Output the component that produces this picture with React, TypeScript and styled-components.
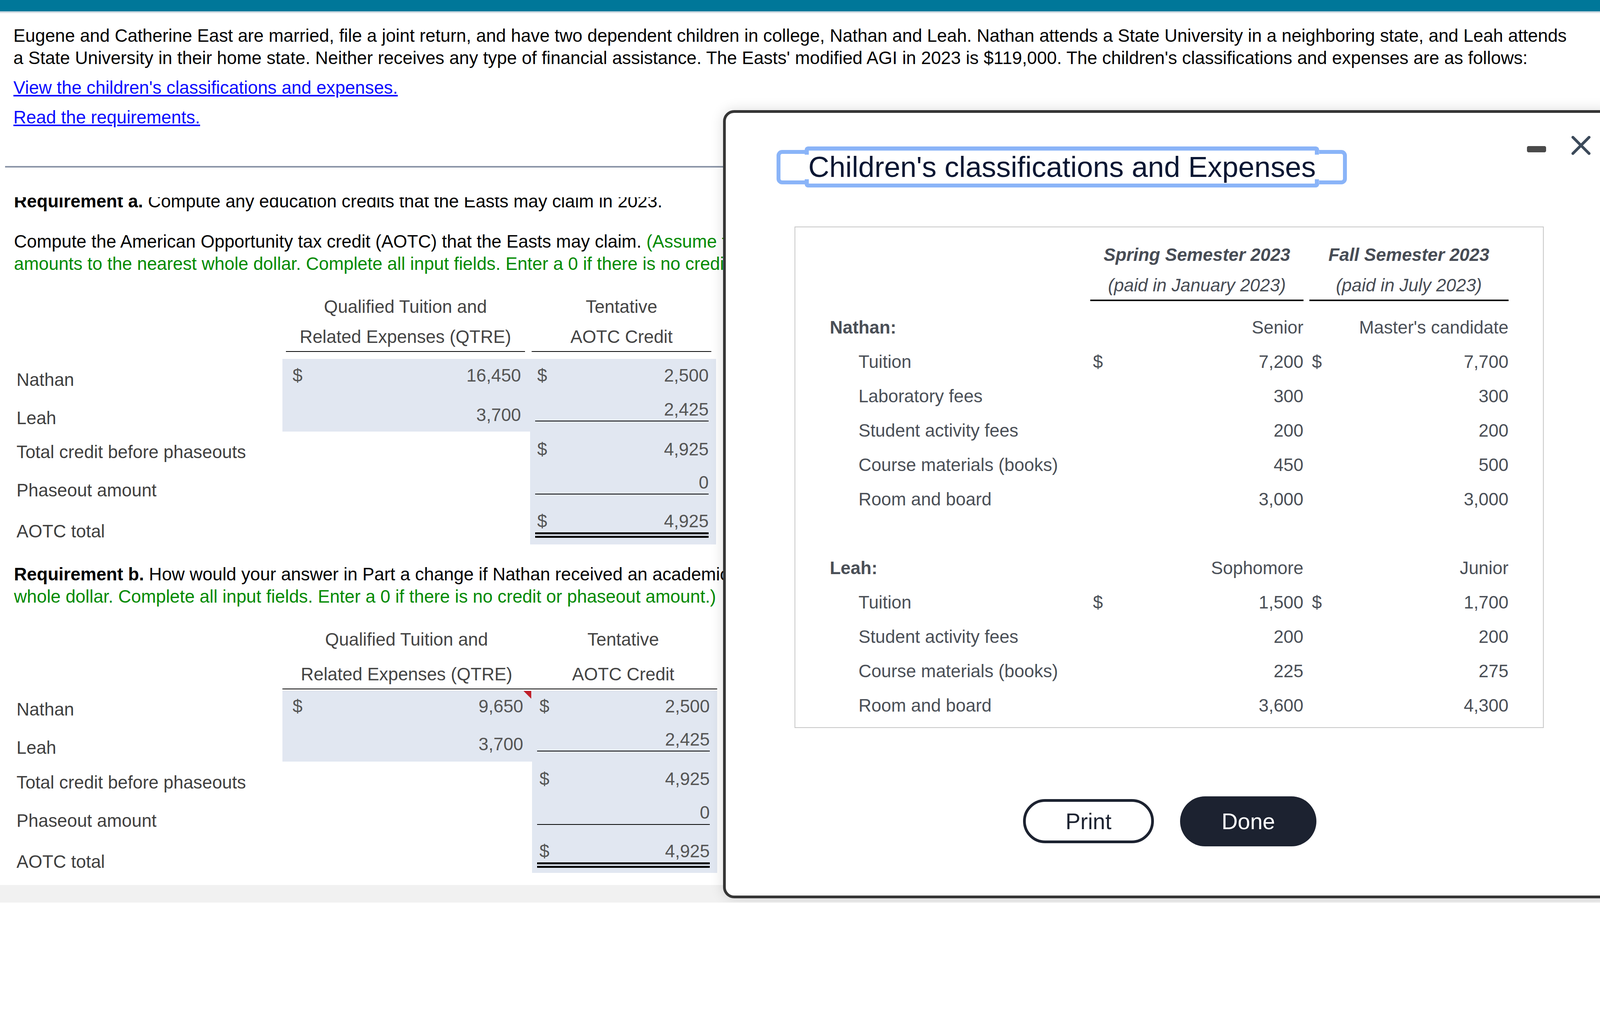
import React from "react";
import styled, { createGlobalStyle } from "styled-components";

const FONT = `"Liberation Sans", Arial, Helvetica, sans-serif`;
const RING = "#8ab4f8";
const SHADE = "#e1e7f1";
const NAVY = "#1c2230";
const DESIGN_WIDTH = 1432.6;

const GlobalStyle = createGlobalStyle`
  html, body { margin: 0; padding: 0; background: #ffffff; overflow: hidden; }
  body { font-family: ${FONT}; }
  *, *::before, *::after { box-sizing: border-box; }
`;

const Page = styled.div<{ $zoom: number }>`
  zoom: ${(p) => p.$zoom};
  position: relative;
  height: 808.31px;
  overflow: hidden;
  display: flex;
  flex-direction: column;
  background: #ffffff;
  font-family: ${FONT};
  font-size: 16px;
  line-height: 20px;
  color: #000;
`;

const TopBar = styled.div`
  flex: none;
  height: 10.2px;
  background: #007799;
  box-shadow: 0 1.5px 0 #d3dbe3;
`;

const Intro = styled.div`
  flex: none;
  padding: 11.8px 18px 0 12px;
`;

const Para = styled.p<{ $mt?: number }>`
  margin: ${(p) => p.$mt ?? 0}px 0 0 0;
`;

const LinkLine = styled.div`
  margin-top: 6.5px;
`;

const TextLink = styled.a`
  color: #0a0aff;
  text-decoration: underline;
  cursor: pointer;
`;

const Divider = styled.div`
  flex: none;
  margin: 33.7px 0 0 4.7px;
  height: 1.2px;
  background: #8b95a7;
`;

const ScrollArea = styled.div`
  flex: none;
  margin-top: 26.8px;
  height: 615.9px;
  overflow: hidden;
`;

const ScrollContent = styled.div`
  margin-top: -6.3px;
  padding: 0 18px 0 12.5px;
`;

const Bold = styled.b`
  font-weight: 700;
`;

const Hint = styled.span`
  color: #008a00;
`;

const Footer = styled.div`
  flex: 1;
  background: #f1f1f1;
`;

/* ---------- AOTC worksheet tables ---------- */

type Line = "single" | "double";
type Cell = { value: string; dollar?: boolean; top: number; line?: Line; flag?: boolean };
type Row = { label: string; h: number; labelTop: number; qtre?: Cell; credit: Cell };
type TableSpec = {
  cols: [number, number, number];
  top: number;
  headerGap: number;
  continuous: boolean;
  rowsGap: number;
  rows: Row[];
};

const Worksheet = styled.div<{ $mt: number }>`
  margin-top: ${(p) => p.$mt}px;
  display: flex;
  flex-direction: column;
`;

const HeaderRow = styled.div<{ $cols: string }>`
  display: grid;
  grid-template-columns: ${(p) => p.$cols};
`;

const HeaderGroup = styled.div<{ $cols: string; $continuous: boolean }>`
  grid-column: 2 / 4;
  display: grid;
  grid-template-columns: ${(p) => p.$cols};
  border-bottom: ${(p) => (p.$continuous ? "1px solid #000" : "none")};
`;

const HeaderCell = styled.div<{ $underline: boolean; $ml: number; $mr: number }>`
  margin: 0 ${(p) => p.$mr}px 0 ${(p) => p.$ml}px;
  padding-bottom: 2.8px;
  text-align: center;
  color: #444;
  white-space: nowrap;
  border-bottom: ${(p) => (p.$underline ? "1px solid #000" : "none")};
`;

const HeaderLine = styled.span<{ $gap?: number }>`
  display: block;
  margin-top: ${(p) => p.$gap ?? 0}px;
`;

const DataRows = styled.div<{ $mt: number }>`
  margin-top: ${(p) => p.$mt}px;
  display: flex;
  flex-direction: column;
`;

const DataRow = styled.div<{ $cols: string; $h: number }>`
  display: grid;
  grid-template-columns: ${(p) => p.$cols};
  height: ${(p) => p.$h}px;
`;

const RowLabel = styled.div<{ $top: number }>`
  padding: ${(p) => p.$top}px 0 0 2.3px;
  color: #3f3f3f;
  white-space: nowrap;
`;

const ValueCell = styled.div<{ $shade: boolean; $top: number }>`
  background: ${(p) => (p.$shade ? SHADE : "transparent")};
  padding-top: ${(p) => p.$top}px;
`;

const Field = styled.div<{ $kind: "qtre" | "credit"; $line?: Line }>`
  position: relative;
  display: flex;
  line-height: 20px;
  color: #555;
  margin: ${(p) => (p.$kind === "qtre" ? "0 1px 0 9px" : "0 6.5px 0 4.5px")};
  padding: ${(p) => (p.$kind === "qtre" ? "0 7px 0 0" : "0 0 0 2px")};
  border-bottom: ${(p) =>
    p.$line === "single" ? "1px solid #000" : p.$line === "double" ? "5px double #000" : "none"};
`;

const Amount = styled.span`
  margin-left: auto;
`;

const Flag = styled.span`
  position: absolute;
  top: -3.9px;
  right: 0;
  width: 0;
  height: 0;
  border-style: solid;
  border-width: 0 7px 7px 0;
  border-color: transparent #c0202a transparent transparent;
`;

const FieldView = ({ cell, kind }: { cell: Cell; kind: "qtre" | "credit" }) => (
  <Field $kind={kind} $line={cell.line}>
    {cell.dollar && <span>$</span>}
    <Amount>{cell.value}</Amount>
    {cell.flag && <Flag />}
  </Field>
);

const AotcTable = ({ spec }: { spec: TableSpec }) => {
  const cols = spec.cols.map((c) => `${c}px`).join(" ");
  const groupCols = `${spec.cols[1]}px ${spec.cols[2]}px`;
  const split = !spec.continuous;
  return (
    <Worksheet $mt={spec.top}>
      <HeaderRow $cols={cols}>
        <div />
        <HeaderGroup $cols={groupCols} $continuous={spec.continuous}>
          <HeaderCell $underline={split} $ml={3} $mr={4.5}>
            <HeaderLine>Qualified Tuition and</HeaderLine>
            <HeaderLine $gap={spec.headerGap}>Related Expenses (QTRE)</HeaderLine>
          </HeaderCell>
          <HeaderCell $underline={split} $ml={1.5} $mr={4}>
            <HeaderLine>Tentative</HeaderLine>
            <HeaderLine $gap={spec.headerGap}>AOTC Credit</HeaderLine>
          </HeaderCell>
        </HeaderGroup>
      </HeaderRow>
      <DataRows $mt={spec.rowsGap}>
        {spec.rows.map((r) => (
          <DataRow key={r.label} $cols={cols} $h={r.h}>
            <RowLabel $top={r.labelTop}>{r.label}</RowLabel>
            <ValueCell $shade={!!r.qtre} $top={r.qtre ? r.qtre.top : 0}>
              {r.qtre && <FieldView cell={r.qtre} kind="qtre" />}
            </ValueCell>
            <ValueCell $shade $top={r.credit.top}>
              <FieldView cell={r.credit} kind="credit" />
            </ValueCell>
          </DataRow>
        ))}
      </DataRows>
    </Worksheet>
  );
};

const tableA: TableSpec = {
  cols: [240.5, 221.5, 166.5],
  top: 18.2,
  headerGap: 7.2,
  continuous: false,
  rowsGap: 6.2,
  rows: [
    { label: "Nathan", h: 34, labelTop: 8.7, qtre: { value: "16,450", dollar: true, top: 5 }, credit: { value: "2,500", dollar: true, top: 5 } },
    { label: "Leah", h: 31, labelTop: 9, qtre: { value: "3,700", top: 6 }, credit: { value: "2,425", top: 1.3, line: "single" } },
    { label: "Total credit before phaseouts", h: 34, labelTop: 8.5, credit: { value: "4,925", dollar: true, top: 6 } },
    { label: "Phaseout amount", h: 33, labelTop: 8.8, credit: { value: "0", top: 1.6, line: "single" } },
    { label: "AOTC total", h: 34.2, labelTop: 12.4, credit: { value: "4,925", dollar: true, top: 3.2, line: "double" } },
  ],
};

const tableB: TableSpec = {
  cols: [240.5, 223.5, 165.5],
  top: 18.5,
  headerGap: 11.3,
  continuous: true,
  rowsGap: 1,
  rows: [
    { label: "Nathan", h: 32, labelTop: 7, qtre: { value: "9,650", dollar: true, top: 4.2, flag: true }, credit: { value: "2,500", dollar: true, top: 4.2 } },
    { label: "Leah", h: 31.7, labelTop: 9.2, qtre: { value: "3,700", top: 6 }, credit: { value: "2,425", top: 1.9, line: "single" } },
    { label: "Total credit before phaseouts", h: 34, labelTop: 8.7, credit: { value: "4,925", dollar: true, top: 5.5 } },
    { label: "Phaseout amount", h: 33.1, labelTop: 9, credit: { value: "0", top: 1.7, line: "single" } },
    { label: "AOTC total", h: 28, labelTop: 12.4, credit: { value: "4,925", dollar: true, top: 2.9, line: "double" } },
  ],
};

/* ---------- Modal ---------- */

const Modal = styled.div`
  position: absolute;
  left: 647.4px;
  top: 98.5px;
  width: 800px;
  height: 706.1px;
  background: #ffffff;
  border: 2.5px solid #353535;
  border-radius: 10px;
  box-shadow: 0 0 12px rgba(0, 0, 0, 0.14);
  display: flex;
  flex-direction: column;
  padding-top: 33.2px;
`;

const Controls = styled.div`
  position: absolute;
  top: 20.8px;
  right: 20.9px;
  display: flex;
  align-items: flex-start;
  gap: 22.8px;
`;

const MinimizeBar = styled.div`
  margin-top: 9.2px;
  width: 17px;
  height: 5.6px;
  border-radius: 1.5px;
  background: #4a4a4a;
`;

const CloseIcon = styled.svg`
  display: block;
  width: 17px;
  height: 17px;
`;

const TitleBox = styled.div`
  align-self: flex-start;
  margin-left: 45.5px;
  display: flex;
  align-items: center;
  height: 30.8px;
  padding: 0 21.3px 0 21.5px;
  border: 3.7px solid ${RING};
  border-radius: 5px;
`;

const TitleText = styled.h2`
  position: relative;
  margin: 0;
  flex: none;
  height: 36.9px;
  padding: 0 3px 0 3.4px;
  font-size: 26px;
  font-weight: 400;
  line-height: 36.9px;
  color: #0b1733;
  white-space: nowrap;
  border-radius: 3px;
  background:
    linear-gradient(${RING}, ${RING}) left top / 100% 3.7px no-repeat,
    linear-gradient(${RING}, ${RING}) left bottom / 100% 3.7px no-repeat,
    linear-gradient(${RING}, ${RING}) left top / 3.7px 7.4px no-repeat,
    linear-gradient(${RING}, ${RING}) right top / 3.7px 7.4px no-repeat,
    linear-gradient(${RING}, ${RING}) left bottom / 3.7px 7.4px no-repeat,
    linear-gradient(${RING}, ${RING}) right bottom / 3.7px 7.4px no-repeat,
    #ffffff;
`;

const TableBox = styled.div`
  margin: 38px 62.6px 0 61.4px;
  border: 1px solid #c6c6c6;
  padding: 14.5px 30.3px 3.6px 31px;
  color: #4a4f57;
`;

const ExpGrid = styled.div`
  display: grid;
  grid-template-columns: 228.1px 190.7px 178.3px;
  column-gap: 5.3px;
`;

const SemHeader = styled.div<{ $col: number }>`
  grid-column: ${(p) => p.$col};
  text-align: center;
  color: #474c55;
  padding-bottom: 2.7px;
  border-bottom: 1.5px solid #111;
  white-space: nowrap;
`;

const SemTitle = styled.span`
  display: block;
  font-weight: 700;
  font-style: italic;
`;

const SemSub = styled.span`
  display: block;
  margin-top: 7.5px;
  font-style: italic;
`;

const ExpRows = styled.div`
  margin-top: 8.2px;
`;

const ExpRow = styled.div`
  display: grid;
  grid-template-columns: 228.1px 190.7px 178.3px;
  column-gap: 5.3px;
  height: 30.8px;
  line-height: 30.8px;
`;

const ExpLabel = styled.div<{ $group?: boolean }>`
  padding-left: ${(p) => (p.$group ? 0 : 25.7)}px;
  font-weight: ${(p) => (p.$group ? 700 : 400)};
  white-space: nowrap;
`;

const ExpValue = styled.div`
  display: flex;
  padding-left: 2.3px;
  white-space: nowrap;
`;

const ButtonRow = styled.div`
  margin-top: 61.4px;
  display: flex;
  justify-content: center;
  align-items: center;
  gap: 23.6px;
`;

const PrintButton = styled.button`
  width: 117px;
  height: 39.5px;
  border: 2.5px solid ${NAVY};
  border-radius: 20px;
  background: #ffffff;
  color: ${NAVY};
  font-family: ${FONT};
  font-size: 20px;
  padding: 0;
  cursor: pointer;
`;

const DoneButton = styled.button`
  width: 122px;
  height: 44.6px;
  border: none;
  border-radius: 23px;
  background: ${NAVY};
  color: #ffffff;
  font-family: ${FONT};
  font-size: 20px;
  padding: 0;
  cursor: pointer;
`;

type ExpLine = { label: string; group?: boolean; spring?: string; fall?: string; dollar?: boolean };

const expenses: ExpLine[] = [
  { label: "Nathan:", group: true, spring: "Senior", fall: "Master's candidate" },
  { label: "Tuition", spring: "7,200", fall: "7,700", dollar: true },
  { label: "Laboratory fees", spring: "300", fall: "300" },
  { label: "Student activity fees", spring: "200", fall: "200" },
  { label: "Course materials (books)", spring: "450", fall: "500" },
  { label: "Room and board", spring: "3,000", fall: "3,000" },
  { label: "", group: true },
  { label: "Leah:", group: true, spring: "Sophomore", fall: "Junior" },
  { label: "Tuition", spring: "1,500", fall: "1,700", dollar: true },
  { label: "Student activity fees", spring: "200", fall: "200" },
  { label: "Course materials (books)", spring: "225", fall: "275" },
  { label: "Room and board", spring: "3,600", fall: "4,300" },
];

const ExpensesModal = () => (
  <Modal role="dialog" aria-label="Children's classifications and Expenses">
    <Controls>
      <MinimizeBar />
      <CloseIcon viewBox="0 0 17 17" aria-label="Close">
        <path d="M1.25 1.25 L15.75 15.75 M15.75 1.25 L1.25 15.75" stroke="#3c4a5a" strokeWidth="2.5" strokeLinecap="round" fill="none" />
      </CloseIcon>
    </Controls>
    <TitleBox>
      <TitleText>Children's classifications and Expenses</TitleText>
    </TitleBox>
    <TableBox>
      <ExpGrid>
        <SemHeader $col={2}>
          <SemTitle>Spring Semester 2023</SemTitle>
          <SemSub>(paid in January 2023)</SemSub>
        </SemHeader>
        <SemHeader $col={3}>
          <SemTitle>Fall Semester 2023</SemTitle>
          <SemSub>(paid in July 2023)</SemSub>
        </SemHeader>
      </ExpGrid>
      <ExpRows>
        {expenses.map((e, i) => (
          <ExpRow key={i}>
            <ExpLabel $group={e.group}>{e.label}</ExpLabel>
            <ExpValue>
              {e.dollar && <span>$</span>}
              <Amount>{e.spring}</Amount>
            </ExpValue>
            <ExpValue>
              {e.dollar && <span>$</span>}
              <Amount>{e.fall}</Amount>
            </ExpValue>
          </ExpRow>
        ))}
      </ExpRows>
    </TableBox>
    <ButtonRow>
      <PrintButton>Print</PrintButton>
      <DoneButton>Done</DoneButton>
    </ButtonRow>
  </Modal>
);

export default function App() {
  const zoom =
    typeof window !== "undefined" && window.innerWidth > 0 ? window.innerWidth / DESIGN_WIDTH : 3.25;
  return (
    <>
      <GlobalStyle />
      <Page $zoom={zoom}>
        <TopBar />
        <Intro>
          <Para>
            Eugene and Catherine East are married, file a joint return, and have two dependent children in college, Nathan and Leah. Nathan attends a State University in a neighboring state, and Leah attends a State University in their home state. Neither receives any type of financial assistance. The Easts' modified AGI in 2023 is $119,000. The children's classifications and expenses are as follows:
          </Para>
          <LinkLine>
            <TextLink>View the children's classifications and expenses.</TextLink>
          </LinkLine>
          <LinkLine>
            <TextLink>Read the requirements.</TextLink>
          </LinkLine>
        </Intro>
        <Divider />
        <ScrollArea>
          <ScrollContent>
            <Para>
              <Bold>Requirement a.</Bold> Compute any education credits that the Easts may claim in 2023.
            </Para>
            <Para $mt={16}>
              Compute the American Opportunity tax credit (AOTC) that the Easts may claim.{" "}
              <Hint>
                (Assume the Easts pay all expenses with their own funds. Round all
                <br />
                amounts to the nearest whole dollar. Complete all input fields. Enter a 0 if there is no credit or phaseout amount.)
              </Hint>
            </Para>
            <AotcTable spec={tableA} />
            <Para $mt={16.5}>
              <Bold>Requirement b.</Bold> How would your answer in Part a change if Nathan received an academic scholarship of $6,800 for the fall semester?{" "}
              <Hint>
                (Round all amounts to the nearest
                <br />
                whole dollar. Complete all input fields. Enter a 0 if there is no credit or phaseout amount.)
              </Hint>
            </Para>
            <AotcTable spec={tableB} />
          </ScrollContent>
        </ScrollArea>
        <Footer />
        <ExpensesModal />
      </Page>
    </>
  );
}
